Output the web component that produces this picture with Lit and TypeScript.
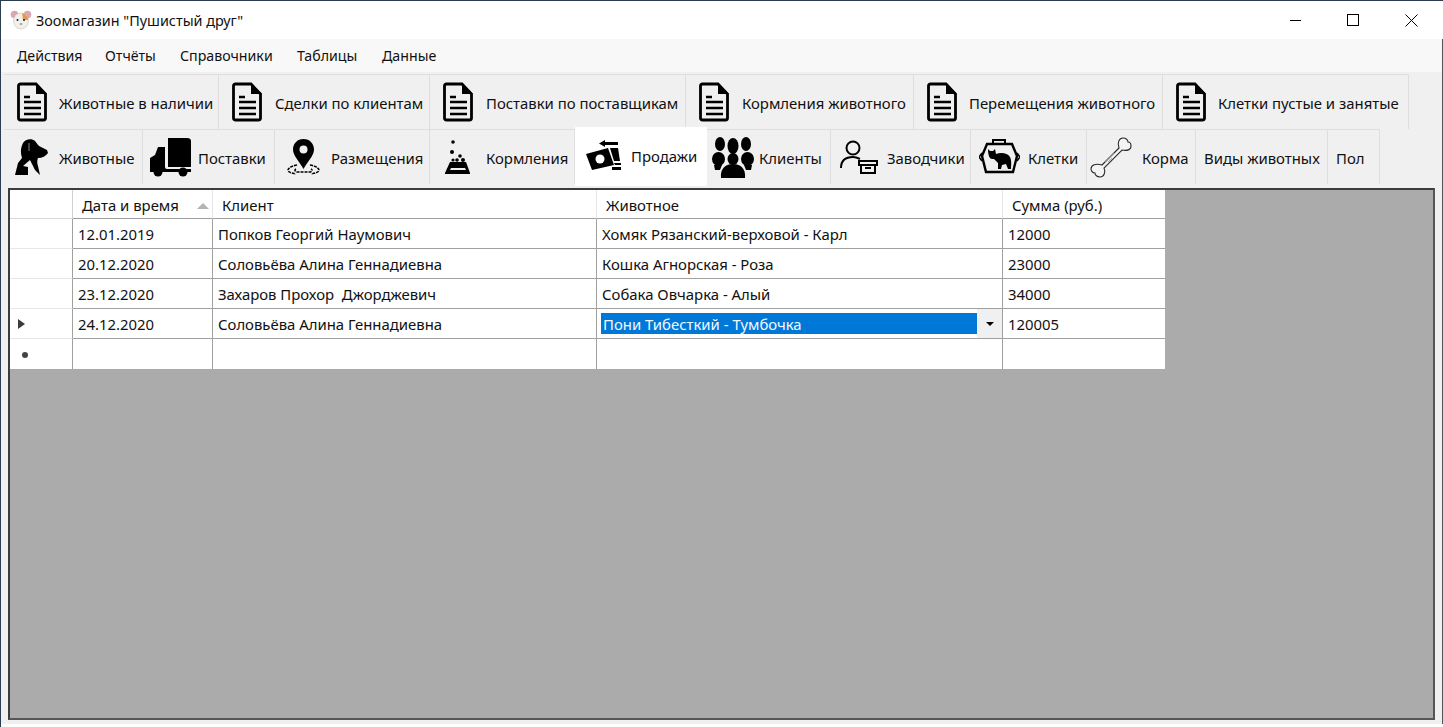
import { LitElement, html, css, TemplateResult } from 'lit'
import { customElement } from 'lit/decorators.js'

const doc = html`<svg width="32" height="40" viewBox="0 0 32 40">
  <path d="M2.5 4 Q2.5 2 4.5 2 H20 L29.5 12 V36 Q29.5 38 27.5 38 H4.5 Q2.5 38 2.5 36 Z" fill="none" stroke="#000" stroke-width="2.8"/>
  <path d="M20 1 L31 12 H20 Z" fill="#000"/>
  <path d="M8 15 H14 M8 20 H25 M8 26 H25 M8 32 H25" stroke="#000" stroke-width="2.4"/>
</svg>`

const dog = html`<svg width="33" height="36" viewBox="0 0 33 36">
  <path d="M8 4 C10 0 17 -1 20 2 C22 4 23 7 26 8 L32 11 L33 14 C31 17 27 19 23 19 C22 21 22 24 23 27 L25 36 L20 31 L15 21 L8 27 L13 28 V36 H0 L3 24 L7 19 C5 13 6 8 8 4 Z" fill="#000"/>
  <path d="M14 4 V12" stroke="#888" stroke-width="1" fill="none"/>
</svg>`

const truck = html`<svg width="41" height="40" viewBox="0 0 41 40">
  <path d="M18 1 H37 Q41 1 41 4 V30 H18 Z" fill="#000"/>
  <path d="M15 10 V30 Q15 32 17 32 H41 V35 H0 V21 L5 18 L8 10 Z" fill="#000"/>
  <circle cx="8" cy="35" r="4.5" fill="#000"/>
  <circle cx="33" cy="35" r="4.5" fill="#000"/>
</svg>`

const pin = html`<svg width="33" height="37" viewBox="0 0 33 37">
  <path d="M16.5 0 C23 0 27 5 27 10.5 C27 17 20 23 16.5 30 C13 23 6 17 6 10.5 C6 5 10 0 16.5 0 Z" fill="#000"/>
  <circle cx="16.5" cy="10.5" r="4" fill="#f0f0f0"/>
  <path d="M10 26 C3 27 1 30 1 31 C1 33 4 34 9 35 M23 26 C30 27 32 30 32 31 C32 33 29 34 24 35 M9 30 C7 31 8 33 11 33 H22 C25 33 26 31 24 30" fill="none" stroke="#000" stroke-width="1.6" stroke-dasharray="3 1"/>
</svg>`

const bowl = html`<svg width="26" height="35" viewBox="0 0 26 35">
  <circle cx="8" cy="2" r="1.8" fill="#000"/><circle cx="7" cy="12" r="2" fill="#000"/>
  <circle cx="15" cy="16" r="1.8" fill="#000"/><circle cx="12" cy="20" r="1.8" fill="#000"/>
  <circle cx="18" cy="20" r="2" fill="#000"/><circle cx="8" cy="20" r="1.6" fill="#000"/>
  <path d="M5 22 H21 L25 33 V34 H0 V33 Z" fill="#000"/>
  <path d="M6 28 H20 L21 30 H5 Z" fill="#f0f0f0"/>
</svg>`

const money = html`<svg width="35" height="31" viewBox="0 0 35 31">
  <path d="M19 0 L13 3.5 L19 7 V5 H32 V2 H19 Z" fill="#000"/>
  <path d="M0 14 L22 8 L28 25 L6 30 Z" fill="#000"/>
  <circle cx="14" cy="19" r="4.5" fill="#fff"/>
  <path d="M24 8 H32 L34 21 H28 Z M28 23 H35 V25 H29 Z M26 27 H35 V30 H26 Z" fill="#000"/>
</svg>`

const people = html`<svg width="42" height="41" viewBox="0 0 42 41">
  <ellipse cx="8" cy="7" rx="5" ry="7" fill="#000"/><ellipse cx="34" cy="7" rx="5" ry="7" fill="#000"/>
  <ellipse cx="21" cy="9" rx="5.5" ry="8" fill="#000"/>
  <ellipse cx="6.5" cy="22" rx="6.5" ry="7" fill="#000"/><ellipse cx="35.5" cy="22" rx="6.5" ry="7" fill="#000"/>
  <ellipse cx="21" cy="22" rx="5.5" ry="6" fill="#000"/>
  <path d="M9 41 C8 31 14 27 21 27 C28 27 34 31 33 41 Z" fill="#000"/>
  <path d="M2 28 H10 L8 33 H3 Z M40 28 H32 L34 33 H39 Z" fill="#000"/>
</svg>`

const keeper = html`<svg width="38" height="34" viewBox="0 0 38 34">
  <circle cx="13" cy="8" r="6.5" fill="none" stroke="#000" stroke-width="2"/>
  <path d="M1 28 C1 19 7 17 13 17 C16 17 18 18 20 19" fill="none" stroke="#000" stroke-width="2"/>
  <path d="M19 21 H37 V25 H19 Z" fill="none" stroke="#000" stroke-width="2"/>
  <path d="M21 25 V33 H35 V25 M25 28 H31" fill="none" stroke="#000" stroke-width="2"/>
</svg>`

const cage = html`<svg width="41" height="36" viewBox="0 0 41 36">
  <path d="M14 5 V1 H26 V5" fill="none" stroke="#000" stroke-width="2"/>
  <path d="M8 5 H33 L38 17 L34 33 H7 L3 17 Z" fill="none" stroke="#000" stroke-width="2.4"/>
  <path d="M3 14 L0 18 L3 22 M38 14 L41 18 L38 22" fill="none" stroke="#000" stroke-width="1.6"/>
  <path d="M9 10 L11 12 H14 L16 10 L17 15 C22 13 29 14 31 18 C33 22 32 27 32 30 H29 L27 25 L23 26 L22 30 H19 V24 L15 20 H13 C11 20 9 17 9 10 Z" fill="#000"/>
</svg>`

const bone = html`<svg width="49" height="41" viewBox="0 0 49 41">
  <path d="M12 28 L29 11 C27 6 29 1 33 1 C36 1 38 3 38 5 C41 5 41 8 41 9 C41 13 37 14 32 13 L14 31 C16 35 14 40 10 40 C7 40 5 38 5 36 C2 36 1 33 1 32 C1 28 6 26 12 28 Z" fill="#f4f4f4" stroke="#2a2a2a" stroke-width="1.1"/>
  <path d="M15 25 L24 16 M18 25 L22 21" fill="none" stroke="#999" stroke-width="0.8"/>
</svg>`

const logo = html`<svg width="22" height="20" viewBox="0 0 22 20">
  <circle cx="4.5" cy="4.5" r="3.8" fill="#d9a7ae"/><circle cx="17.5" cy="4.5" r="3.8" fill="#d9a7ae"/>
  <ellipse cx="11" cy="11" rx="7.5" ry="8" fill="#f2f0ec" stroke="#c9c6c0" stroke-width="0.6"/>
  <path d="M12 3.2 C15 3.2 18 6 18.3 10 L13 10 Z" fill="#e39a55"/>
  <circle cx="7.5" cy="10" r="1" fill="#222"/><circle cx="14" cy="10" r="1" fill="#222"/>
  <ellipse cx="11" cy="14" rx="1.4" ry="1" fill="#b98"/>
</svg>`

interface Tab {
  label: string
  width: number
  icon?: TemplateResult
  slot?: number
  active?: boolean
}

const reportTabs: Tab[] = [
  { label: 'Животные в наличии', width: 215, icon: doc, slot: 47 },
  { label: 'Сделки по клиентам', width: 211, icon: doc },
  { label: 'Поставки по поставщикам', width: 256, icon: doc },
  { label: 'Кормления животного', width: 228, icon: doc },
  { label: 'Перемещения животного', width: 249, icon: doc, slot: 47 },
  { label: 'Клетки пустые и занятые', width: 246, icon: doc, slot: 47 },
]

const dataTabs: Tab[] = [
  { label: 'Животные', width: 139, icon: dog, slot: 47 },
  { label: 'Поставки', width: 132, icon: truck, slot: 47 },
  { label: 'Размещения', width: 155, icon: pin },
  { label: 'Кормления', width: 145, icon: bowl },
  { label: 'Продажи', width: 132, icon: money, active: true },
  { label: 'Клиенты', width: 124, icon: people, slot: 44 },
  { label: 'Заводчики', width: 140, icon: keeper },
  { label: 'Клетки', width: 116, icon: cage, slot: 49 },
  { label: 'Корма', width: 109, icon: bone, slot: 47 },
  { label: 'Виды животных', width: 132 },
  { label: 'Пол', width: 52 },
]

const columns = ['Дата и время', 'Клиент', 'Животное', 'Сумма (руб.)']

const rows = [
  ['12.01.2019', 'Попков Георгий Наумович', 'Хомяк Рязанский-верховой - Карл', '12000'],
  ['20.12.2020', 'Соловьёва Алина Геннадиевна', 'Кошка Агнорская - Роза', '23000'],
  ['23.12.2020', 'Захаров Прохор  Джорджевич', 'Собака Овчарка - Алый', '34000'],
  ['24.12.2020', 'Соловьёва Алина Геннадиевна', 'Пони Тибесткий - Тумбочка', '120005'],
]

@customElement('app-root')
export class AppRoot extends LitElement {
  static styles = css`
    :host {
      display: block;
      font-family: 'Noto Sans', 'Open Sans', sans-serif;
      color: #111;
    }

    .window {
      width: 1443px;
      height: 727px;
      box-sizing: border-box;
      display: flex;
      flex-direction: column;
      background: #fff;
      border-top: 1px solid #2b3d4f;
      border-left: 1px solid #2b3d4f;
      overflow: hidden;
    }

    .titlebar {
      height: 38px;
      flex: none;
      display: flex;
      align-items: center;
      padding-right: 3px;
      background: #fff;
    }

    .logo {
      width: 22px;
      height: 20px;
      margin-left: 9px;
      margin-right: 4px;
    }

    .title {
      font-size: 14.4px;
      flex: 1;
      white-space: pre;
    }

    .win-btn {
      width: 58px;
      height: 38px;
      display: flex;
      align-items: center;
      justify-content: center;
    }

    .menu {
      height: 33px;
      flex: none;
      display: grid;
      grid-template-columns: 88px 75px 117px 85px auto;
      justify-content: start;
      align-items: center;
      padding-left: 16px;
      background: #f8f8f8;
      font-size: 14.2px;
      border-right: 1px solid #555;
    }

    .body {
      flex: 1;
      min-height: 0;
      display: flex;
      flex-direction: column;
      background: #f0f0f0;
      padding: 2px 7px 4px 3px;
      margin-bottom: 3px;
      border-right: 1px solid #555;
    }

    .strip {
      display: flex;
      height: 55px;
      flex: none;
    }

    .tab {
      box-sizing: border-box;
      flex: none;
      display: flex;
      align-items: center;
      gap: 4px;
      padding-left: 4px;
      border-top: 1px solid #dedede;
      border-right: 1px solid #dedede;
      font-size: 14.9px;
      white-space: nowrap;
      position: relative;
    }

    .label {
      padding-top: 2px;
    }

    .tab.plain {
      padding-left: 8px;
    }

    .tab.active {
      background: #fff;
      margin: -2px 0;
      padding-bottom: 3px;
      border-color: #fff;
      z-index: 1;
    }

    .tab.active .label {
      padding-top: 0;
    }

    .slot {
      display: flex;
      justify-content: center;
    }

    .slot svg {
      flex: none;
    }

    .panel {
      flex: 1;
      min-height: 0;
      margin-top: 4px;
      margin-left: 4px;
      background: #ababab;
      border: 2px solid #3c3c3c;
      border-right-color: #555;
      border-bottom-color: #555;
    }

    .grid {
      display: grid;
      grid-template-columns: 63px 140px 384px 406px 162px;
      grid-template-rows: 29px repeat(5, 30px);
      width: 1155px;
      background: #fff;
      font-size: 14.9px;
    }

    .cell {
      box-sizing: border-box;
      display: flex;
      align-items: center;
      padding-left: 5px;
      padding-top: 1px;
      border-right: 1px solid #a0a0a0;
      border-bottom: 1px solid #a0a0a0;
      white-space: pre;
      min-width: 0;
    }

    .cell.last-col {
      border-right: none;
    }

    .cell.last-row {
      border-bottom: none;
    }

    .head {
      padding-left: 9px;
      border-right: 1px solid #e6e6e6;
      position: relative;
    }

    .corner {
      border-bottom: 1px solid #d8d8d8;
      border-right: 1px solid #d0d0d0;
    }

    .header-cell {
      padding-left: 6px;
      border-bottom: 1px solid #e6e6e6;
    }

    .sort {
      position: absolute;
      left: 124px;
      top: 13px;
      width: 0;
      height: 0;
      border-left: 6px solid transparent;
      border-right: 6px solid transparent;
      border-bottom: 6px solid #b4b4b4;
    }

    .editor {
      padding: 0 0 0 4px;
      align-items: stretch;
    }

    .selected {
      flex: 1;
      margin: 4px 0;
      padding-left: 2px;
      display: flex;
      align-items: center;
      background: #0078d7;
      color: #f2f8ff;
    }

    .drop {
      width: 25px;
      background: #f0f0f0;
      display: flex;
      align-items: center;
      justify-content: center;
    }

    .drop i {
      width: 0;
      height: 0;
      border-left: 4px solid transparent;
      border-right: 4px solid transparent;
      border-top: 4px solid #000;
    }

    .marker {
      width: 0;
      height: 0;
      margin-left: 2px;
      border-top: 5.5px solid transparent;
      border-bottom: 5.5px solid transparent;
      border-left: 7px solid #3c3c3c;
    }

    .new-mark {
      width: 6px;
      height: 6px;
      margin-left: 6px;
      border-radius: 50%;
      background: #444;
    }
  `

  private renderTab(tab: Tab) {
    const cls = `tab${tab.active ? ' active' : ''}${tab.icon ? '' : ' plain'}`
    return html`
      <div class=${cls} style="width:${tab.width}px">
        ${tab.icon ? html`<span class="slot" style="width:${tab.slot ?? 48}px">${tab.icon}</span>` : ''}
        <span class="label">${tab.label}</span>
      </div>
    `
  }

  private renderRow(row: string[], index: number) {
    const current = index === rows.length - 1
    return html`
      <div class="cell header-cell">${current ? html`<span class="marker"></span>` : ''}</div>
      ${row.map((value, col) => {
        if (current && col === 2) {
          return html`<div class="cell editor">
            <span class="selected">${value}</span>
            <span class="drop"><i></i></span>
          </div>`
        }
        return html`<div class="cell ${col === 3 ? 'last-col' : ''}">${value}</div>`
      })}
    `
  }

  render() {
    return html`
      <div class="window">
        <div class="titlebar">
          <span class="logo">${logo}</span>
          <span class="title">Зоомагазин "Пушистый друг"</span>
          <span class="win-btn"><svg width="11" height="11"><path d="M0 5.5 H11" stroke="#000"/></svg></span>
          <span class="win-btn"><svg width="12" height="12"><rect x="0.5" y="0.5" width="11" height="11" fill="none" stroke="#000"/></svg></span>
          <span class="win-btn"><svg width="13" height="13"><path d="M0.5 0.5 L12.5 12.5 M12.5 0.5 L0.5 12.5" stroke="#000"/></svg></span>
        </div>
        <div class="menu">
          <span>Действия</span><span>Отчёты</span><span>Справочники</span><span>Таблицы</span><span>Данные</span>
        </div>
        <div class="body">
          <div class="strip">${reportTabs.map((t) => this.renderTab(t))}</div>
          <div class="strip">${dataTabs.map((t) => this.renderTab(t))}</div>
          <div class="panel">
            <div class="grid">
              <div class="cell corner"></div>
              ${columns.map((c, i) => html`<div class="cell head ${i === 3 ? 'last-col' : ''}">${c}${i === 0 ? html`<span class="sort"></span>` : ''}</div>`)}
              ${rows.map((r, i) => this.renderRow(r, i))}
              <div class="cell header-cell last-row"><span class="new-mark"></span></div>
              <div class="cell last-row"></div>
              <div class="cell last-row"></div>
              <div class="cell last-row"></div>
              <div class="cell last-row last-col"></div>
            </div>
          </div>
        </div>
      </div>
    `
  }
}

declare global {
  interface HTMLElementTagNameMap {
    'app-root': AppRoot
  }
}
